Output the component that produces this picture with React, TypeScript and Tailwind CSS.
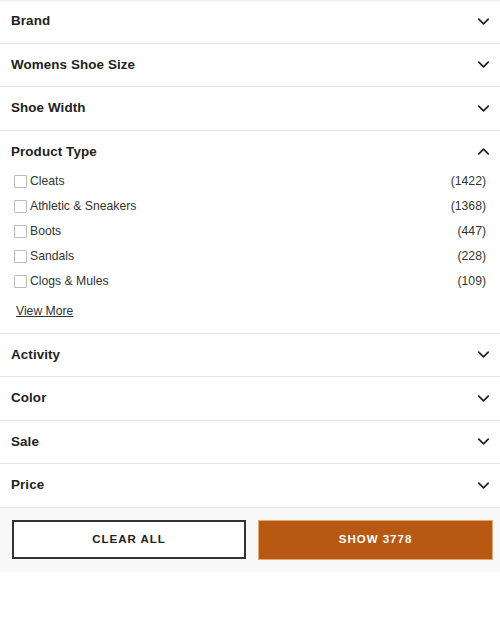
import { ChevronDown, ChevronUp } from "lucide-react";

const sections = ["Brand", "Womens Shoe Size", "Shoe Width"];
const after = ["Activity", "Color", "Sale", "Price"];

const productTypes = [
  { label: "Cleats", count: 1422 },
  { label: "Athletic & Sneakers", count: 1368 },
  { label: "Boots", count: 447 },
  { label: "Sandals", count: 228 },
  { label: "Clogs & Mules", count: 109 },
];

const FilterHeader = ({ title, open }: { title: string; open?: boolean }) => {
  return (
    <div className="h-[42.5px] flex items-center justify-between pl-[11px] pr-[7px]">
      <h3 className="text-[13.4px] font-bold tracking-[0.1px] text-[#222]">{title}</h3>
      {open ? (
        <ChevronUp width={19} height={19} strokeWidth={2.2} className="text-[#222]" />
      ) : (
        <ChevronDown width={19} height={19} strokeWidth={2.2} className="text-[#222]" />
      )}
    </div>
  );
};

const App = () => {
  return (
    <div className="w-[500px] h-[627px] bg-white font-['Liberation_Sans',Arial,sans-serif] shadow-[inset_0_3px_3px_-2px_rgba(0,0,0,0.08)]">
      {sections.map((s) => (
        <div key={s} className="border-b border-[#e5e5e5]">
          <FilterHeader title={s} />
        </div>
      ))}
      <div className="border-b border-[#e5e5e5]">
        <FilterHeader title="Product Type" open />
        <ul className="px-[14px] -mt-[4px] flex flex-col">
          {productTypes.map((p) => (
            <li key={p.label} className="h-[25px] flex items-center justify-between">
              <label className="flex items-center text-[12.2px] text-[#333]">
                <span className="w-[13px] h-[13px] border border-[#bbb] rounded-[1px] me-[3px] bg-white" />
                {p.label}
              </label>
              <span className="text-[12.2px] text-[#333]">({p.count})</span>
            </li>
          ))}
        </ul>
        <div className="px-4 pt-[8.5px] pb-[14px] text-[12.2px] leading-[16px]">
          <a className="text-[#333] underline">View More</a>
        </div>
      </div>
      {after.map((s) => (
        <div key={s} className="border-b border-[#e5e5e5]">
          <FilterHeader title={s} />
        </div>
      ))}
      <div className="bg-[#f8f8f8] h-[64px] flex items-center gap-3 pl-3">
        <button className="w-[234px] h-[39px] border-2 border-[#333] bg-white text-[11.5px] font-bold tracking-[1px] text-[#222]">
          CLEAR ALL
        </button>
        <button className="w-[235px] h-[40px] border border-[#e6a877] bg-[#b85913] text-[11.5px] font-bold tracking-[1px] text-white">
          SHOW 3778
        </button>
      </div>
    </div>
  );
};

export default App;
